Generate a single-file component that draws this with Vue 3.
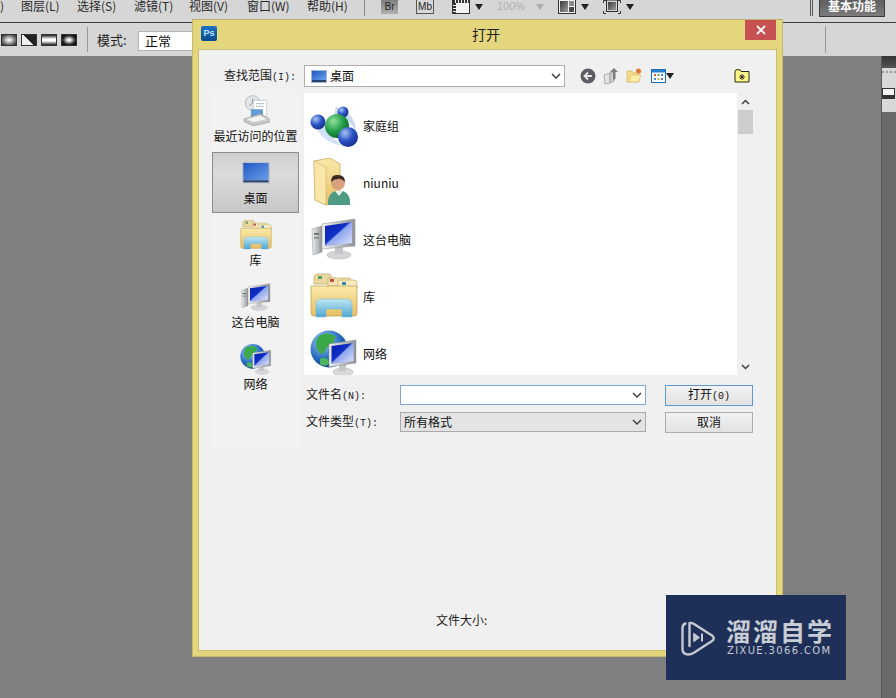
<script setup>
const menus = [
  { label: ')', width: 21 },
  { label: '图层(L)', width: 56 },
  { label: '选择(S)', width: 57 },
  { label: '滤镜(T)', width: 55 },
  { label: '视图(V)', width: 58 },
  { label: '窗口(W)', width: 60 },
  { label: '帮助(H)', width: 57 }
]
const places = [
  { icon: 'recent', label: '最近访问的位置' },
  { icon: 'desk', label: '桌面', active: true },
  { icon: 'library', label: '库' },
  { icon: 'computer', label: '这台电脑' },
  { icon: 'network', label: '网络' }
]
const files = [
  { icon: 'homegroup', label: '家庭组' },
  { icon: 'user', label: 'niuniu' },
  { icon: 'computer', label: '这台电脑' },
  { icon: 'library', label: '库' },
  { icon: 'network', label: '网络' }
]
const swatches = ['radial', 'diag', 'bars', 'spot']
</script>

<template>
  <div class="app">
    <svg class="sprite" aria-hidden="true">
      <defs>
        <linearGradient id="gScreen" x1="0" y1="0" x2="1" y2="1">
          <stop offset="0" stop-color="#0a1fa8" />
          <stop offset=".45" stop-color="#1030c8" />
          <stop offset=".5" stop-color="#8fa6ee" />
          <stop offset="1" stop-color="#dfe6fb" />
        </linearGradient>
        <linearGradient id="gCase" x1="0" y1="0" x2="1" y2="0">
          <stop offset="0" stop-color="#f1f1f1" />
          <stop offset="1" stop-color="#8e9296" />
        </linearGradient>
        <linearGradient id="gFolder" x1="0" y1="0" x2="0" y2="1">
          <stop offset="0" stop-color="#fbe9a8" />
          <stop offset="1" stop-color="#e6bf65" />
        </linearGradient>
        <linearGradient id="gArch" x1="0" y1="0" x2="0" y2="1">
          <stop offset="0" stop-color="#bfe6f2" />
          <stop offset="1" stop-color="#4da6d0" />
        </linearGradient>
        <linearGradient id="gDesk" x1="0" y1="0" x2="1" y2="1">
          <stop offset="0" stop-color="#1f58c4" />
          <stop offset="1" stop-color="#6d9fe8" />
        </linearGradient>
        <linearGradient id="gPanel" x1="0" y1="0" x2="1" y2="1">
          <stop offset="0" stop-color="#3c3c3c" />
          <stop offset="1" stop-color="#9a9a9a" />
        </linearGradient>
        <radialGradient id="gBlue" cx=".35" cy=".3" r=".8">
          <stop offset="0" stop-color="#a9c5f5" />
          <stop offset=".5" stop-color="#2a53c4" />
          <stop offset="1" stop-color="#122a80" />
        </radialGradient>
        <radialGradient id="gGreen" cx=".35" cy=".3" r=".8">
          <stop offset="0" stop-color="#8fe29a" />
          <stop offset=".55" stop-color="#1f9a45" />
          <stop offset="1" stop-color="#0c5c2a" />
        </radialGradient>
        <radialGradient id="gGlobe" cx=".35" cy=".3" r=".8">
          <stop offset="0" stop-color="#9fd0f5" />
          <stop offset=".6" stop-color="#2468c0" />
          <stop offset="1" stop-color="#0e3478" />
        </radialGradient>
      </defs>

      <symbol id="i-monitor" viewBox="0 0 48 48">
        <path d="M12 9 L45 4 V31 L12 34 Z" fill="url(#gCase)" stroke="#9a9ea2" stroke-width=".6" />
        <path d="M15 11 L42 7 V28 L15 31 Z" fill="url(#gScreen)" />
      </symbol>

      <symbol id="computer" viewBox="0 0 48 48">
        <path d="M2 14 L12 11 V37 L3 40 Z" fill="url(#gCase)" stroke="#8a8e92" stroke-width=".5" />
        <rect x="4" y="18" width="5" height="1.6" fill="#666" />
        <rect x="4" y="22" width="5" height="1.6" fill="#888" />
        <ellipse cx="29" cy="40" rx="12" ry="4" fill="#d3d5d7" stroke="#a8abae" stroke-width=".5" />
        <rect x="25" y="32" width="8" height="7" fill="#c3c5c8" />
        <use href="#i-monitor" width="48" height="48" />
      </symbol>

      <symbol id="network" viewBox="0 0 48 48">
        <circle cx="19" cy="20" r="18.500" fill="url(#gGlobe)" />
        <path d="M8 8 C14 3 22 4 26 8 C23 12 25 15 20 17 C15 18 16 24 12 25 C7 24 4 14 8 8 Z" fill="#3da84a" />
        <path d="M10 30 C14 27 19 30 19 34 C17 38 13 37 10 35 Z" fill="#4bb659" />
        <ellipse cx="33" cy="43" rx="10" ry="4" fill="#d6d8da" stroke="#a8abae" stroke-width=".5" />
        <rect x="29" y="35" width="7" height="7" fill="#c3c5c8" />
        <path d="M19 15 L46 11 V34 L19 38 Z" fill="url(#gCase)" stroke="#8a8e92" stroke-width=".5" />
        <path d="M21.500 17 L43.500 14 V32 L21.500 35 Z" fill="url(#gScreen)" />
      </symbol>

      <symbol id="library" viewBox="0 0 48 48">
        <path d="M4 6 Q4 2 8 2 H20 L22 6 H26 V12 H4 Z" fill="#e9d9a0" stroke="#c2a863" stroke-width=".7" />
        <rect x="8" y="4" width="4" height="3" fill="#5d9c5d" />
        <path d="M18 6 H40 V14 H18 Z" fill="#f4e6b4" stroke="#c2a863" stroke-width=".7" />
        <rect x="20" y="7" width="4" height="3" fill="#b9553f" />
        <path d="M28 8 H44 Q47 8 47 12 V16 H28 Z" fill="#f7ecc2" stroke="#c2a863" stroke-width=".7" />
        <rect x="32" y="10" width="4" height="3" fill="#3f87a8" />
        <path d="M1 14 H47 V41 Q47 44 44 44 H4 Q1 44 1 41 Z" fill="url(#gFolder)" stroke="#c2a25a" stroke-width=".8" />
        <path d="M6 45 V32 Q6 27 11 27 H37 Q42 27 42 32 V45 H32 V37 H16 V45 Z" fill="url(#gArch)" stroke="#6fb4d3" stroke-width=".5" />
      </symbol>

      <symbol id="user" viewBox="0 0 48 48">
        <path d="M4 3 L20 0 L30 6 V44 L16 47 L5 42 Z" fill="url(#gFolder)" stroke="#c8aa62" stroke-width=".8" />
        <path d="M4 3 L16 9 V47 L5 42 Z" fill="#f8e7a9" stroke="#d1b36d" stroke-width=".6" />
        <path d="M18 47 Q17 36 25 33 H33 Q41 36 40 47 Z" fill="#4f9a83" />
        <path d="M25 33 L29 38 L33 33 Z" fill="#e4f1ea" />
        <circle cx="28" cy="25" r="7" fill="#d9a27e" />
        <path d="M21 24 Q21 16 28 17 Q35 17 35 24 Q31 20 28 21 Q24 21 21 24 Z" fill="#3b2c22" />
      </symbol>

      <symbol id="homegroup" viewBox="0 0 48 48">
        <path d="M6 26 Q12 41 32 45 Q18 34 14 20 Z" fill="#d3e1f6" />
        <path d="M26 6 Q46 12 46 32 Q42 18 24 14 Z" fill="#c8d9f4" />
        <circle cx="8" cy="21" r="7.500" fill="url(#gBlue)" />
        <circle cx="33" cy="11" r="5.500" fill="url(#gBlue)" />
        <circle cx="27" cy="25" r="12" fill="url(#gGreen)" />
        <circle cx="38" cy="36" r="10" fill="url(#gBlue)" />
      </symbol>

      <symbol id="recent" viewBox="0 0 48 48">
        <circle cx="19" cy="12" r="11" fill="#e4e6ea" stroke="#9ea3ab" stroke-width="1" />
        <path d="M19 5 V12 L14 16" fill="none" stroke="#7a8088" stroke-width="1.200" />
        <path d="M20 8 H40 V32 H20 Z" fill="#fff" stroke="#a7acb4" stroke-width=".8" />
        <path d="M24 13 H36 M24 17 H36" stroke="#9aa9c6" stroke-width="1.200" />
        <path d="M17 22 H34 V33 H17 Z" fill="#5f9fd8" stroke="#3f6f9f" stroke-width=".7" />
        <path d="M6 36 L30 28 L44 36 V41 L20 46 L6 40 Z" fill="#c7c9cc" stroke="#85888d" stroke-width=".8" />
        <path d="M10 36 L30 31 L40 36 L20 41 Z" fill="#f2f2f2" />
      </symbol>

      <symbol id="desk" viewBox="0 0 48 48">
        <rect x="3" y="7" width="42" height="33" fill="#c2c6cc" />
        <rect x="5" y="9" width="38" height="26" fill="url(#gDesk)" />
        <rect x="5" y="35" width="38" height="3" fill="#28416c" />
      </symbol>
    </svg>

    <header class="menubar">
      <div class="menus">
        <span v-for="m in menus" :key="m.label" class="menu" :style="{ width: m.width + 'px' }">{{ m.label }}</span>
      </div>
      <i class="vsep"></i>
      <span class="app-badge br">Br</span>
      <span class="app-badge mb">Mb</span>
      <svg class="tool" width="18" height="14" viewBox="0 0 18 14">
        <rect x=".5" y="-1" width="17" height="14.500" fill="#f2f2f2" stroke="#333" />
        <path d="M1 1.500 H17" stroke="#333" stroke-width="3" stroke-dasharray="2 1" />
        <path d="M2.500 3 V13" stroke="#333" stroke-width="3" stroke-dasharray="2 1" />
      </svg>
      <i class="caret c1"></i>
      <span class="zoom">100%</span>
      <i class="caret dim"></i>
      <svg class="tool" width="18" height="14" viewBox="0 0 18 14">
        <rect x=".5" y="-1" width="17" height="14.500" fill="#f2f2f2" stroke="#333" />
        <rect x="2" y="1" width="8" height="11" fill="url(#gPanel)" />
        <rect x="11" y="1" width="5" height="5" fill="#8a8a8a" />
        <rect x="11" y="7" width="5" height="5" fill="#4a4a4a" />
      </svg>
      <i class="caret c2"></i>
      <svg class="tool" width="18" height="14" viewBox="0 0 18 14">
        <path d="M.5 3 V.5 H3 M15 .5 H17.500 V3 M.5 11 V13.500 H3 M15 13.500 H17.500 V11" fill="none" stroke="#333" />
        <rect x="3.500" y="0" width="11" height="11.500" fill="#d0d0d0" stroke="#333" />
        <rect x="5" y="2" width="8" height="8" fill="url(#gPanel)" />
      </svg>
      <i class="caret c3"></i>
      <i class="dbl"></i>
      <span class="workspace">基本功能</span>
    </header>

    <div class="optionbar">
      <span v-for="s in swatches" :key="s" class="swatch" :class="s"></span>
      <i class="opt-sep"></i>
      <span class="mode-label">模式:</span>
      <span class="mode-select">正常</span>
      <i class="opt-sep right"></i>
    </div>

    <aside class="dock">
      <div class="dock-head"></div>
      <div class="dock-panel">
        <i class="grip"></i>
        <i class="dock-icon"></i>
      </div>
    </aside>

    <section class="dialog">
      <div class="titlebar">
        <span class="ps">Ps</span>
        <span class="title">打开</span>
        <span class="close">
          <svg width="10" height="10" viewBox="0 0 10 10"><path d="M1 1 L9 9 M9 1 L1 9" stroke="#fff" stroke-width="1.800" /></svg>
        </span>
      </div>

      <div class="inner">
        <div class="look">
          <label class="look-label">查找范围<span class="mono">(I):</span></label>
          <div class="combo look-combo">
            <svg class="mini" width="16" height="13" viewBox="0 0 16 13">
              <rect width="16" height="13" fill="#9fb6d8" />
              <rect x="1" y="1" width="14" height="9" fill="url(#gDesk)" />
              <rect x="1" y="10" width="14" height="2" fill="#28416c" />
            </svg>
            <span>桌面</span>
            <svg class="chev" width="10" height="6" viewBox="0 0 10 6"><path d="M1 1 L5 5 L9 1" fill="none" stroke="#444" stroke-width="1.500" /></svg>
          </div>
          <div class="nav">
            <svg class="nav-back" width="16" height="16" viewBox="0 0 16 16">
              <circle cx="8" cy="8" r="7.500" fill="#5a5e62" />
              <path d="M12 8 H5 M8 4.500 L4.500 8 L8 11.500" fill="none" stroke="#e8e8e8" stroke-width="1.800" />
            </svg>
            <svg class="nav-up" width="16" height="18" viewBox="0 0 16 18">
              <path d="M1 8 L7 6 V16 L2 17 Z" fill="#e4e4e4" stroke="#9a9a9a" stroke-width=".8" />
              <path d="M7 6 L11 5 V14 L7 16 Z" fill="#cfcfcf" stroke="#9a9a9a" stroke-width=".8" />
              <path d="M10 13 V5 H7 L11 1 L15 5 H12.500 V12 Z" fill="#7d7d7d" />
            </svg>
            <svg class="nav-new" width="16" height="15" viewBox="0 0 16 15">
              <path d="M1 3 H6 L7 5 H13 V14 H1 Z" fill="#f4dd86" stroke="#d5b766" stroke-width=".8" />
              <path d="M2.500 14 L5 7 H15 L12.500 14 Z" fill="#fbeca8" stroke="#d5b766" stroke-width=".6" />
              <circle cx="12.500" cy="3" r="2.500" fill="#e8762c" />
            </svg>
            <svg class="nav-view" width="15" height="14" viewBox="0 0 15 14">
              <rect x=".5" y=".5" width="14" height="13" fill="#f7fbff" stroke="#1e6eb8" />
              <rect x="1" y="1" width="13" height="2.500" fill="#2a7ecb" />
              <rect x="3" y="5" width="2" height="2" fill="#d9534f" />
              <rect x="6.500" y="5" width="2" height="2" fill="#5aa84f" />
              <rect x="10" y="5" width="2" height="2" fill="#4f86d9" />
              <rect x="3" y="9" width="2" height="2" fill="#4f86d9" />
              <rect x="6.500" y="9" width="2" height="2" fill="#d9a84f" />
              <rect x="10" y="9" width="2" height="2" fill="#777" />
            </svg>
            <i class="caret nav-caret"></i>
            <svg class="nav-star" width="16" height="14" viewBox="0 0 16 14">
              <path d="M1 2 L2 .8 H6 L7 2.500 H15 V13 H1 Z" fill="#fbf58a" stroke="#2a2a10" stroke-width="1" />
              <path d="M8 5 V11 M5 8 H11 M6 6 L10 10 M10 6 L6 10" stroke="#222" stroke-width=".9" />
            </svg>
          </div>
        </div>

        <div class="body">
          <nav class="places">
            <div v-for="p in places" :key="p.label" class="place" :class="{ active: p.active }">
              <svg class="place-icon"><use :href="'#' + p.icon" /></svg>
              <span>{{ p.label }}</span>
            </div>
          </nav>

          <div class="main">
            <div class="list">
              <div class="rows">
                <div v-for="f in files" :key="f.label" class="row">
                  <svg class="row-icon"><use :href="'#' + f.icon" /></svg>
                  <span>{{ f.label }}</span>
                </div>
              </div>
              <div class="scroll">
                <svg class="sb-btn" width="9" height="6" viewBox="0 0 9 6"><path d="M1 5 L4.500 1.500 L8 5" fill="none" stroke="#404040" stroke-width="1.500" /></svg>
                <i class="thumb"></i>
                <svg class="sb-btn down" width="9" height="6" viewBox="0 0 9 6"><path d="M1 1 L4.500 4.500 L8 1" fill="none" stroke="#404040" stroke-width="1.500" /></svg>
              </div>
            </div>

            <div class="form">
              <label>文件名<span class="mono">(N):</span></label>
              <div class="combo field focus">
                <svg class="chev" width="10" height="6" viewBox="0 0 10 6"><path d="M1 1 L5 5 L9 1" fill="none" stroke="#444" stroke-width="1.500" /></svg>
              </div>
              <button class="btn primary">打开<span class="mono">(0)</span></button>
              <label>文件类型<span class="mono">(T):</span></label>
              <div class="combo field readonly">
                <span>所有格式</span>
                <svg class="chev" width="10" height="6" viewBox="0 0 10 6"><path d="M1 1 L5 5 L9 1" fill="none" stroke="#444" stroke-width="1.500" /></svg>
              </div>
              <button class="btn">取消</button>
            </div>
          </div>
        </div>

        <div class="filesize">文件大小:</div>
      </div>
    </section>

    <aside class="mark">
      <svg class="mark-logo" width="36" height="36" viewBox="0 0 36 36" fill="none" stroke="#c4c8d0" stroke-width="2.400" stroke-linecap="round" stroke-linejoin="round">
        <path d="M5.500 3.500 Q2.500 4.500 2.500 8 V29 Q2.500 34 8 34.500 Q11 34.500 13.500 33 L32 21 Q35.500 18 32 15.500 L14 4 Q11.500 2.500 9.500 3 V26" />
        <path d="M14 13.500 L19.500 17.500 L14 21.500 Z" fill="#c4c8d0" stroke-width="1" />
        <path d="M22 13.500 V21.500" stroke-width="2" stroke-linecap="butt" />
      </svg>
      <div class="mark-text">
        <strong>溜溜自学</strong>
        <small>ZIXUE.3066.COM</small>
      </div>
    </aside>
  </div>
</template>

<style>
html, body { margin: 0; background: #808080; }
</style>

<style scoped>
.app {
  position: relative;
  width: 896px;
  height: 698px;
  overflow: hidden;
  background: #808080;
  color: #111;
  font: 12px/16px "Noto Sans CJK SC", "Liberation Sans", sans-serif;
}
.sprite { position: absolute; width: 0; height: 0; }
i { display: block; font-style: normal; }
.mono { font-family: "Liberation Mono", monospace; font-size: 10px; }

/* Menu bar */
.menubar {
  display: flex;
  align-items: flex-start;
  height: 22px;
  background: #d6d6d6;
  border-bottom: 1px solid #3f3f3f;
  overflow: hidden;
}
.menus { display: flex; width: 364px; flex: none; }
.menu { flex: none; line-height: 12px; color: #2a2a2a; white-space: nowrap; }
.vsep { flex: none; width: 1px; height: 16px; background: #8a8a8a; margin-right: 16px; }
.app-badge {
  flex: none;
  width: 17px;
  height: 15px;
  margin-top: -1px;
  font: 10px/15px "Liberation Sans", sans-serif;
  text-align: center;
  color: #222;
  box-sizing: border-box;
}
.br { background: linear-gradient(#7b7b7b, #b0b0b0); margin-right: 18px; }
.mb { width: 18px; border: 1px solid #555; line-height: 13px; background: #d9d9d9; margin-right: 18px; }
.tool { flex: none; display: block; }
.caret {
  flex: none;
  width: 0;
  height: 0;
  margin-top: 4px;
  border: 4px solid transparent;
  border-top: 6px solid #222;
  border-bottom: 0;
}
.c1 { margin-left: 5px; }
.zoom { flex: none; margin-left: 14px; width: 28px; color: #b0b0b0; line-height: 12px; font-size: 11px; font-family: "Liberation Sans", sans-serif; }
.dim { border-top-color: #adadad; margin-left: 11px; margin-right: 14px; }
.c2 { margin-left: 5px; margin-right: 14px; }
.c3 { margin-left: 5px; margin-right: 176px; }
.dbl { flex: none; width: 1px; height: 16px; border-left: 1px solid #555; border-right: 1px solid #555; margin-right: 6px; }
.workspace {
  flex: none;
  box-sizing: border-box;
  width: 66px;
  height: 17px;
  border: 1px solid #3c3c3c;
  border-top: 0;
  background: linear-gradient(#5f5f5f, #7c7c7c);
  color: #fff;
  font-size: 12px;
  font-weight: 700;
  line-height: 12px;
  text-align: center;
  white-space: nowrap;
}

/* Options bar */
.optionbar {
  display: flex;
  align-items: center;
  height: 33px;
  background: #d6d6d6;
  padding-left: 1px;
}
.swatch {
  flex: none;
  width: 16px;
  height: 12px;
  margin-right: 4px;
  border: 1px solid #333;
  box-sizing: border-box;
}
.radial { background: radial-gradient(#f2f2f2 10%, #333 90%); }
.diag { background: linear-gradient(45deg, #eee 50%, #222 50%); }
.bars { background: linear-gradient(#222, #fff 40%, #fff 60%, #222); }
.spot { background: radial-gradient(#fff 10%, #111 70%); }
.opt-sep { flex: none; width: 1px; height: 25px; background: #9a9a9a; margin-left: 6px; }
.opt-sep.right { margin-left: 632px; height: 27px; }
.mode-label { flex: none; width: 41px; margin-left: 9px; font-size: 13px; color: #222; }
.mode-select {
  flex: none;
  box-sizing: border-box;
  width: 55px;
  height: 20px;
  padding-left: 6px;
  line-height: 18px;
  font-size: 13px;
  background: #fff;
  border: 1px solid #b5b5b5;
  border-right: 0;
  margin-top: 3px;
}

/* Right dock */
.dock {
  position: absolute;
  left: 881px;
  top: 56px;
  width: 15px;
  height: 642px;
  background: #6a6a6a;
  border-left: 1px solid #5a5a5a;
  box-sizing: border-box;
}
.dock-head { height: 12px; background: linear-gradient(#333, #555); }
.dock-panel { height: 44px; background: #d8d8d8; box-sizing: border-box; padding-top: 3px; }
.grip { width: 14px; height: 3px; border-top: 2px dotted #9a9a9a; }
.dock-icon { margin-top: 12px; width: 13px; height: 11px; border: 1px solid #333; border-bottom: 4px solid #333; background: #f3f3f3; box-sizing: border-box; }

/* Dialog */
.dialog {
  position: absolute;
  left: 192px;
  top: 19px;
  width: 591px;
  height: 638px;
  box-sizing: border-box;
  background: #e3d67c;
  border: 1px solid #c4b96c;
  border-top-color: #bdb174;
  padding: 0 6px 6px;
  display: flex;
  flex-direction: column;
}
.titlebar {
  position: relative;
  flex: none;
  height: 30px;
  display: flex;
  justify-content: center;
  align-items: center;
}
.ps {
  position: absolute;
  left: 2px;
  top: 6px;
  width: 16px;
  height: 15px;
  border-radius: 2px;
  background: linear-gradient(#1b73c4, #0b4a8c);
  color: #bfe3ff;
  font: 700 9px/15px "Liberation Sans", sans-serif;
  text-align: center;
}
.title { font-size: 14px; line-height: 26px; margin-bottom: 2px; color: #222; padding-right: 3px; }
.close {
  position: absolute;
  right: 0;
  top: 0;
  width: 31px;
  height: 20px;
  background: #c75050;
  display: flex;
  align-items: center;
  justify-content: center;
}
.inner {
  flex: 1;
  min-height: 0;
  position: relative;
  box-sizing: border-box;
  background: #f0f0f0;
  box-shadow: 0 0 0 1px #c9bd6e;
  padding: 15px 23px 0 12px;
}

.look { display: flex; align-items: center; height: 22px; }
.look-label { flex: none; width: 85px; margin-right: 8px; text-align: right; white-space: nowrap; color: #222; }
.combo {
  position: relative;
  box-sizing: border-box;
  display: flex;
  align-items: center;
  background: #fff;
  border: 1px solid #aeaeae;
}
.look-combo { flex: none; width: 261px; height: 22px; padding-left: 6px; font-size: 12px; gap: 3px; }
.chev { position: absolute; right: 3px; top: 50%; margin-top: -3px; }
.nav { position: relative; flex: 1; height: 22px; }
.nav svg, .nav .caret { position: absolute; }
.nav-back { left: 15px; top: 3px; }
.nav-up { left: 38px; top: 2px; }
.nav-new { left: 61px; top: 3px; }
.nav-view { left: 86px; top: 4px; }
.nav-caret { left: 101px; top: 4px; }
.nav-star { left: 169px; top: 4px; }

.body { display: flex; margin-top: 5px; }
.places { flex: none; width: 89px; height: 358px; margin-top: -2px; background: #f2f2f2; }
.place {
  box-sizing: border-box;
  height: 62px;
  padding-top: 5px;
  margin-left: 1px;
  width: 87px;
  display: flex;
  flex-direction: column;
  align-items: center;
  white-space: nowrap;
  line-height: 18px;
  color: #111;
}
.place-icon { width: 32px; height: 32px; flex: none; }
.place.active {
  height: 61px;
  margin-bottom: 1px;
  background: linear-gradient(#cdcdcd, #dcdcdc 35%, #c6c6c6);
  outline: 1px solid #8c8c8c;
  outline-offset: -1px;
}
.main { flex: 1; margin-left: 4px; padding-top: 1px; min-width: 0; }
.list { display: flex; height: 282px; background: #fff; overflow: hidden; }
.rows { flex: 1; padding: 3px 0 0 6px; }
.row { display: flex; align-items: center; height: 57px; gap: 5px; }
.row span { margin-top: 2px; }
.row-icon { width: 48px; height: 48px; flex: none; }
.scroll {
  position: relative;
  flex: none;
  width: 16px;
  background: #f0f0f0;
}
.sb-btn { position: absolute; left: 4px; top: 6px; }
.sb-btn.down { top: auto; bottom: 5px; }
.thumb { position: absolute; left: 1px; top: 17px; width: 15px; height: 24px; background: #cdcdcd; }

.form {
  display: grid;
  grid-template-columns: 94px 246px 88px;
  column-gap: 0;
  row-gap: 7px;
  grid-auto-rows: 20px;
  align-items: center;
  margin-top: 10px;
  padding-left: 2px;
}
.form label { white-space: nowrap; color: #222; }
.field { height: 20px; padding-left: 3px; }
.focus { border-color: #7da7d9; }
.readonly { background: #e4e4e4; border-color: #a9a9a9; }
.btn {
  margin-left: 19px;
  width: 88px;
  height: 21px;
  box-sizing: border-box;
  padding: 0;
  font: inherit;
  color: #111;
  background: linear-gradient(#f2f2f2, #e2e2e2);
  border: 1px solid #adadad;
}
.primary { border-color: #5b9bd5; }
.filesize { position: absolute; left: 237px; top: 562px; color: #222; }

/* Watermark */
.mark {
  position: absolute;
  left: 666px;
  top: 595px;
  width: 180px;
  height: 85px;
  box-sizing: border-box;
  padding: 22px 0 0 14px;
  display: flex;
  align-items: flex-start;
  gap: 11px;
  background: #1f3058;
  color: #c8ccd4;
}
.mark-logo { flex: none; margin-top: 3px; }
.mark-text { display: flex; flex-direction: column; }
.mark strong { font-size: 25px; line-height: 26px; font-weight: 700; letter-spacing: 2px; white-space: nowrap; margin-left: -1px; }
.mark small { font: 10px/12px "DejaVu Sans", sans-serif; letter-spacing: 1.35px; margin-top: 2px; white-space: nowrap; }
</style>
